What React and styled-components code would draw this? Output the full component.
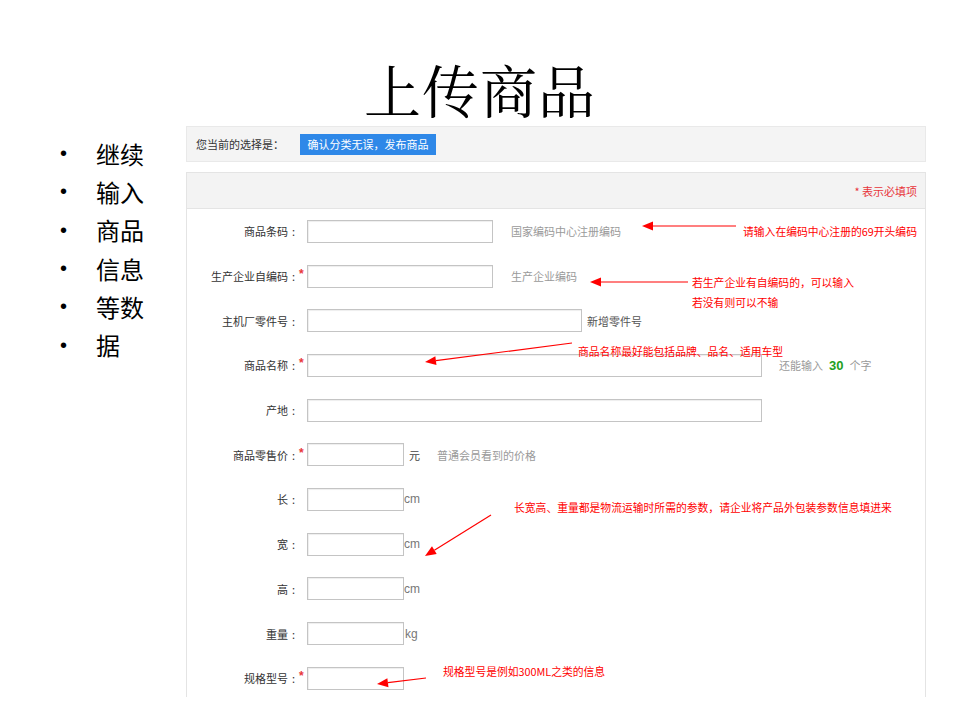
import React from "react";
import styled, { createGlobalStyle } from "styled-components";

const GlobalStyle = createGlobalStyle`
  html, body { margin: 0; padding: 0; background: #ffffff; }
  body { font-family: "Noto Sans CJK SC", "Liberation Sans", sans-serif; }
  * { box-sizing: border-box; }
`;

const CJK = `"Noto Sans CJK SC", "Liberation Sans", sans-serif`;

const Slide = styled.div`
  position: relative;
  width: 960px;
  height: 720px;
  overflow: hidden;
  background: #ffffff;
  display: flex;
  flex-direction: column;
`;

const Title = styled.h1`
  margin: 0;
  height: 126px;
  padding-top: 59px;
  font-family: "Noto Serif CJK SC", ${CJK};
  font-weight: 400;
  font-size: 57px;
  line-height: 58px;
  text-align: center;
  color: #000;
  letter-spacing: 1px;
`;

const Content = styled.div`
  display: flex;
  align-items: flex-start;
`;

const Bullets = styled.ul`
  list-style: none;
  margin: 8px 0 0;
  padding: 0 0 0 58px;
  width: 186px;
`;

const Bullet = styled.li`
  display: flex;
  align-items: center;
  height: 38.3px;
  font-family: ${CJK};
  font-size: 24px;
  color: #000;
`;

const Dot = styled.span`
  width: 38px;
  font-family: "Liberation Sans", sans-serif;
  font-size: 20px;
  line-height: 1;
  padding-left: 2px;
`;

const Shot = styled.div`
  width: 740px;
  height: 571px;
  display: flex;
  flex-direction: column;
  overflow: hidden;
  font-family: ${CJK};
`;

const TopBar = styled.div`
  height: 36px;
  flex: none;
  display: flex;
  align-items: center;
  padding-left: 9px;
  background: #f4f4f4;
  border: 1px solid #e9e9e9;
`;

const TopLabel = styled.span`
  width: 104px;
  font-size: 11px;
  color: #333;
`;

const PrimaryButton = styled.button`
  width: 136px;
  height: 21px;
  padding: 0;
  border: none;
  background: #2e88e8;
  color: #fff;
  font-family: ${CJK};
  font-size: 11px;
  line-height: 21px;
`;

const FormPanel = styled.div`
  flex: 1;
  margin-top: 10px;
  border: 1px solid #e4e4e4;
  border-bottom: none;
  display: flex;
  flex-direction: column;
`;

const FormHeader = styled.div`
  height: 36px;
  flex: none;
  display: flex;
  align-items: center;
  justify-content: flex-end;
  padding-right: 8px;
  background: #f3f3f3;
  border-bottom: 1px solid #e4e4e4;
`;

const RequiredNote = styled.span`
  font-size: 11px;
  color: #e8353a;
`;

const FormBody = styled.div`
  display: flex;
  flex-direction: column;
`;

const Row = styled.div`
  height: 44.7px;
  flex: none;
  display: flex;
  align-items: center;
`;

const Label = styled.span`
  width: 112px;
  text-align: right;
  font-size: 11px;
  color: #333;
  white-space: nowrap;
`;

const Colon = styled.span`
  display: inline-block;
  width: 11px;
  text-align: center;
`;

const Req = styled.span`
  width: 8px;
  align-self: center;
  margin-top: -4px;
  font-family: "Liberation Sans", sans-serif;
  font-size: 12px;
  font-weight: bold;
  color: #e8353a;
`;

const Input = styled.div`
  width: ${(p) => p.$w}px;
  height: 23px;
  flex: none;
  background: #fff;
  border: 1px solid #c4c4c4;
  box-shadow: inset 1px 1px 1px rgba(0, 0, 0, 0.07);
`;

const Hint = styled.span`
  margin-left: ${(p) => p.$gap}px;
  font-size: ${(p) => p.$size || 11}px;
  font-family: ${(p) => (p.$latin ? `"Liberation Sans", sans-serif` : CJK)};
  color: ${(p) => p.$color};
  white-space: nowrap;
`;

const Count = styled.b`
  margin: 0 6px;
  font-family: "Liberation Sans", sans-serif;
  font-size: 13px;
  color: #23a023;
`;

const Overlay = styled.svg`
  position: absolute;
  left: 0;
  top: 0;
  pointer-events: none;
`;

const Note = styled.div`
  position: absolute;
  left: ${(p) => p.$x}px;
  top: ${(p) => p.$y}px;
  font-family: ${CJK};
  font-size: 10.8px;
  line-height: 20px;
  color: #ff0000;
  white-space: nowrap;
`;

function Arrow({ x1, y1, x2, y2 }) {
  const dx = x2 - x1;
  const dy = y2 - y1;
  const len = Math.hypot(dx, dy);
  const ux = dx / len;
  const uy = dy / len;
  const hl = 11;
  const hw = 4.5;
  const bx = x2 - ux * hl;
  const by = y2 - uy * hl;
  const pts = [
    [x2, y2],
    [bx - uy * hw, by + ux * hw],
    [bx + uy * hw, by - ux * hw],
  ]
    .map((p) => p.join(","))
    .join(" ");
  return (
    <g>
      <line x1={x1} y1={y1} x2={bx} y2={by} stroke="#ff0000" strokeWidth="1.2" />
      <polygon points={pts} fill="#ff0000" />
    </g>
  );
}

const rows = [
  { label: "商品条码", w: 186, after: [{ t: "国家编码中心注册编码", gap: 18, color: "#9a9a9a" }] },
  { label: "生产企业自编码", req: true, w: 186, after: [{ t: "生产企业编码", gap: 18, color: "#9a9a9a" }] },
  { label: "主机厂零件号", w: 275, after: [{ t: "新增零件号", gap: 5, color: "#555" }] },
  { label: "商品名称", req: true, w: 455, counter: true },
  { label: "产地", w: 455 },
  {
    label: "商品零售价",
    req: true,
    w: 97,
    after: [
      { t: "元", gap: 5, color: "#444" },
      { t: "普通会员看到的价格", gap: 17, color: "#9a9a9a" },
    ],
  },
  { label: "长", w: 97, after: [{ t: "cm", gap: 0, color: "#777", latin: true, size: 12 }] },
  { label: "宽", w: 97, after: [{ t: "cm", gap: 0, color: "#777", latin: true, size: 12 }] },
  { label: "高", w: 97, after: [{ t: "cm", gap: 0, color: "#777", latin: true, size: 12 }] },
  { label: "重量", w: 97, after: [{ t: "kg", gap: 1, color: "#777", latin: true, size: 12 }] },
  { label: "规格型号", req: true, w: 97 },
];

const bullets = ["继续", "输入", "商品", "信息", "等数", "据"];

export default function App() {
  return (
    <>
      <GlobalStyle />
      <Slide>
        <Title>上传商品</Title>
        <Content>
          <Bullets>
            {bullets.map((b) => (
              <Bullet key={b}>
                <Dot>•</Dot>
                {b}
              </Bullet>
            ))}
          </Bullets>
          <Shot>
            <TopBar>
              <TopLabel>您当前的选择是：</TopLabel>
              <PrimaryButton>确认分类无误，发布商品</PrimaryButton>
            </TopBar>
            <FormPanel>
              <FormHeader>
                <RequiredNote>* 表示必填项</RequiredNote>
              </FormHeader>
              <FormBody>
                {rows.map((r) => (
                  <Row key={r.label}>
                    <Label>
                      {r.label}
                      <Colon>:</Colon>
                    </Label>
                    <Req>{r.req ? "*" : ""}</Req>
                    <Input $w={r.w} />
                    {(r.after || []).map((a) => (
                      <Hint key={a.t} $gap={a.gap} $color={a.color} $latin={a.latin} $size={a.size}>
                        {a.t}
                      </Hint>
                    ))}
                    {r.counter && (
                      <Hint $gap={17} $color="#9a9a9a">
                        还能输入<Count>30</Count>个字
                      </Hint>
                    )}
                  </Row>
                ))}
              </FormBody>
            </FormPanel>
          </Shot>
        </Content>

        <Overlay width="960" height="720" viewBox="0 0 960 720">
          <Arrow x1={736} y1={226} x2={642} y2={226} />
          <Arrow x1={688} y1={282} x2={590} y2={282} />
          <Arrow x1={572} y1={343} x2={425} y2={362} />
          <Arrow x1={491} y1={515} x2={425} y2={556} />
          <Arrow x1={426} y1={678} x2={377} y2={684} />
        </Overlay>
        <Note $x={743} $y={221}>请输入在编码中心注册的69开头编码</Note>
        <Note $x={692} $y={272}>
          若生产企业有自编码的，可以输入
          <br />
          若没有则可以不输
        </Note>
        <Note $x={578} $y={341}>商品名称最好能包括品牌、品名、适用车型</Note>
        <Note $x={514} $y={497}>长宽高、重量都是物流运输时所需的参数，请企业将产品外包装参数信息填进来</Note>
        <Note $x={443} $y={661}>规格型号是例如300ML之类的信息</Note>
      </Slide>
    </>
  );
}
